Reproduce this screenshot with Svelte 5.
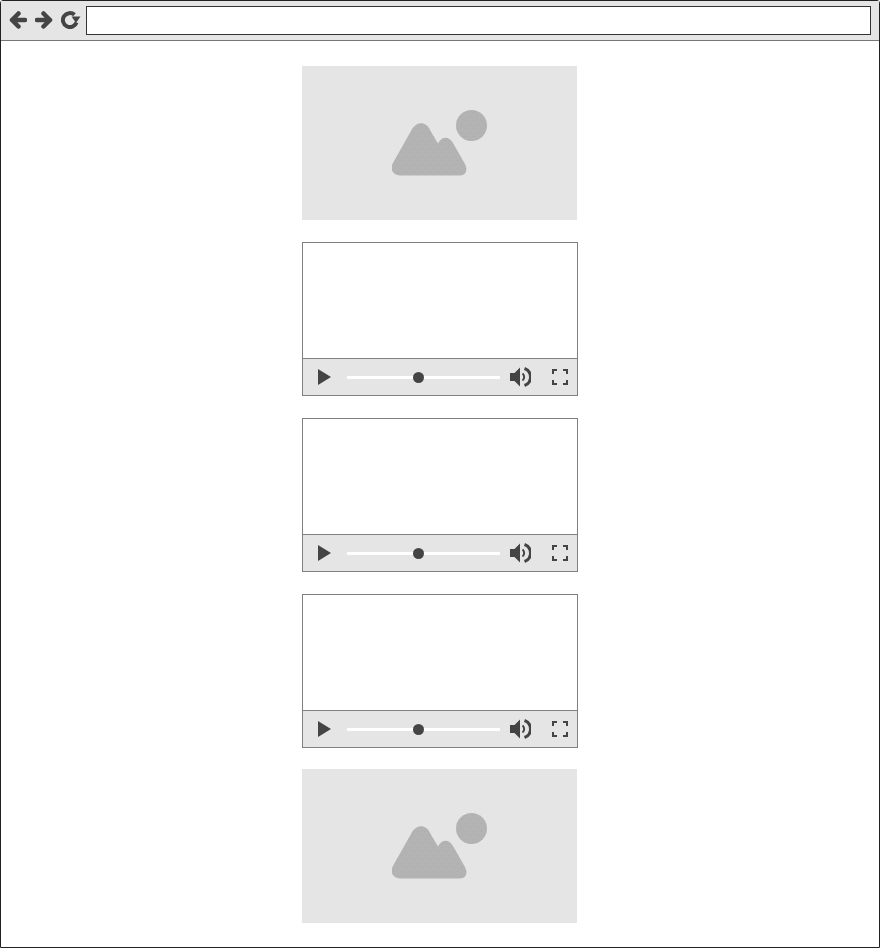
<script>
  const blocks = ['image', 'video', 'video', 'video', 'image'];
</script>

<div class="browser">
  <header class="toolbar">
    <svg class="nav-icon" width="18" height="18" viewBox="0 0 18 18">
      <path d="M16 9H3M9.500 2.500 3 9l6.500 6.500" />
    </svg>
    <svg class="nav-icon" width="18" height="18" viewBox="0 0 18 18">
      <path d="M2 9h13M8.500 2.500 15 9l-6.500 6.500" />
    </svg>
    <svg class="reload" width="20" height="18" viewBox="0 0 20 18">
      <path class="reload-arc" d="M13.500 3.800A7 7 0 1 0 15.500 11.500" />
      <path class="reload-tip" d="M10.500 5.500h9L15 12z" />
    </svg>
    <div class="address"></div>
  </header>

  <main class="page">
    {#each blocks as block, i}
      {#if block === 'image'}
        <div class="image-box">
          <svg width="95" height="66" viewBox="0 0 95 66">
            <defs>
              <pattern id="grain-{i}" width="8" height="8" patternUnits="userSpaceOnUse">
                <rect width="8" height="8" fill="#b3b3b3" />
                <rect x="1" y="2" width="1" height="1" fill="#a9a9a9" />
                <rect x="5" y="6" width="1" height="1" fill="#a9a9a9" />
              </pattern>
            </defs>
            <circle cx="79.500" cy="15.500" r="15.500" fill="url(#grain-{i})" />
            <path
              fill="url(#grain-{i})"
              d="M8 65.500C2 65.500-1.500 60-.500 56.500C0 54.500 1 53 2 51L19 21C24 11 34 11 38 20L46 33.500C49.500 26 57 26 61 33L73 54C76 60 74 65.500 68 65.500Z"
            />
          </svg>
        </div>
      {:else}
        <div class="video-box">
          <div class="screen"></div>
          <div class="controls">
            <svg class="play" width="13" height="16" viewBox="0 0 13 16"><path d="M0 0l13 8L0 16z" /></svg>
            <div class="track"><span class="knob"></span></div>
            <svg class="volume" width="21" height="20" viewBox="0 0 21 20">
              <path class="cone" d="M0 6h4.500L10 .5v19L4.500 14H0z" />
              <path class="wave" d="M12.500 6.500a4.500 4.500 0 0 1 0 7" />
              <path class="wave outer" d="M14.500 1.500a9 9 0 0 1 0 17" />
            </svg>
            <svg class="fullscreen" width="16" height="16" viewBox="0 0 16 16">
              <path d="M1 5V1h4M11 1h4v4M15 11v4h-4M5 15H1v-4" />
            </svg>
          </div>
        </div>
      {/if}
    {/each}
  </main>
</div>

<style>
  :global(body) {
    background: #fff;
  }

  .browser {
    box-sizing: border-box;
    width: 880px;
    height: 948px;
    border: 1px solid #222;
    border-radius: 3px 3px 0 0;
    display: flex;
    flex-direction: column;
    background: #fff;
  }

  .toolbar {
    box-sizing: border-box;
    height: 40px;
    flex: none;
    display: flex;
    align-items: center;
    padding: 0 8px 1px 8px;
    background: #e5e5e5;
    border-bottom: 1px solid #777;
  }

  .nav-icon {
    margin-right: 8px;
  }

  .nav-icon path {
    fill: none;
    stroke: #444;
    stroke-width: 4.500;
    stroke-linejoin: round;
    stroke-linecap: round;
  }

  .reload {
    margin-right: 5px;
  }

  .reload-arc {
    fill: none;
    stroke: #444;
    stroke-width: 4;
  }

  .reload-tip {
    fill: #444;
  }

  .address {
    flex: 1;
    height: 29px;
    box-sizing: border-box;
    background: #fff;
    border: 1px solid #333;
  }

  .page {
    flex: 1;
    display: flex;
    flex-direction: column;
    align-items: center;
    gap: 22px;
    padding: 25px 1px 0 0;
  }

  .image-box,
  .video-box {
    box-sizing: border-box;
    flex: none;
    width: 275px;
    height: 154px;
  }

  .image-box {
    display: flex;
    align-items: center;
    justify-content: center;
    background: #e5e5e5;
  }

  .image-box:last-child {
    margin-top: -1px;
  }

  .video-box {
    width: 276px;
    margin-right: -1px;
    display: flex;
    flex-direction: column;
    border: 1px solid #808080;
  }

  .screen {
    flex: 1;
    background: #fff;
  }

  .controls {
    box-sizing: border-box;
    height: 37px;
    flex: none;
    display: flex;
    align-items: center;
    padding-left: 15px;
    background: #e5e5e5;
    border-top: 1px solid #808080;
  }

  .play {
    fill: #444;
    margin-right: 16px;
  }

  .track {
    position: relative;
    width: 153px;
    height: 3px;
    margin-right: 10px;
    background: #fff;
  }

  .knob {
    position: absolute;
    left: 65.500px;
    top: -4px;
    width: 11px;
    height: 11px;
    border-radius: 50%;
    background: #444;
  }

  .volume {
    margin-right: 21px;
  }

  .cone {
    fill: #444;
  }

  .wave {
    fill: none;
    stroke: #444;
    stroke-width: 2;
  }

  .wave.outer {
    stroke-width: 3;
  }

  .fullscreen path {
    fill: none;
    stroke: #444;
    stroke-width: 2;
  }
</style>
